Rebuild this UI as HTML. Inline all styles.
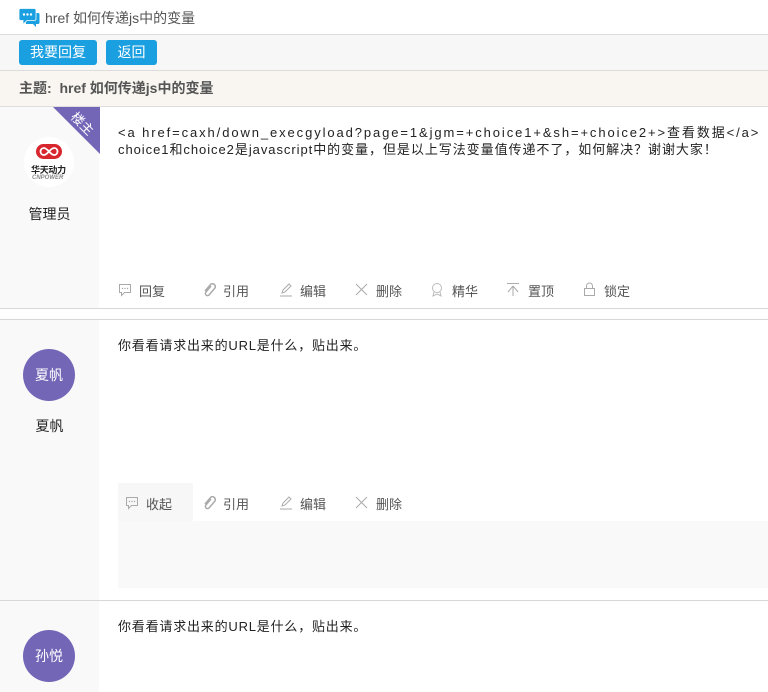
<!DOCTYPE html>
<html><head><meta charset="utf-8"><style>
*{margin:0;padding:0;box-sizing:border-box}
body{width:768px;height:692px;overflow:hidden;background:#fff;font-family:"Liberation Sans","Noto Sans CJK SC",sans-serif;color:#333;position:relative}
.abs{position:absolute}
.hdr{left:0;top:0;width:768px;height:35px;border-bottom:1px solid #ddd;background:#fff}
.bar{left:0;top:35px;width:768px;height:36px;background:#f7f7f7;border-bottom:1px solid #ddd}
.btn{position:absolute;top:5px;height:25px;background:#1a9fe0;color:#fff;font-size:14px;line-height:25px;text-align:center;border-radius:3px}
.topic{left:0;top:71px;width:768px;height:36px;background:#f9f6f1;border-bottom:1px solid #ddd;font-size:14px;font-weight:bold;color:#555;line-height:35px;padding-left:19px}
.left{left:0;width:99px;background:#f9f9f9}
.line{left:0;width:768px;height:1px;background:#d8d8d8}
.txt{font-size:13px;color:#222;white-space:nowrap}
.act{font-size:13px;color:#555;white-space:nowrap}
.act span{position:absolute}
.av{border-radius:50%;background:#7466b7;color:#fff;font-size:14px;text-align:center;line-height:52px;width:52px;height:52px}
.nm{font-size:14px;color:#222;width:99px;text-align:center}
svg{position:absolute}
</style></head><body>
<div class="abs hdr">
<svg style="left:19px;top:8px" width="21" height="19" viewBox="0 0 21 19"><path d="M5 5h14a1.5 1.5 0 0 1 1.5 1.5v8A1.5 1.5 0 0 1 19 16h-2v3l-3-3H7" fill="#1a9fe0"/><path d="M1.5 .5h14a1.5 1.5 0 0 1 1.5 1.5v9a1.5 1.5 0 0 1-1.5 1.5H8l-4 4v-4H1.5A1.5 1.5 0 0 1 0 11V2A1.5 1.5 0 0 1 1.5.5z" fill="#1a9fe0" stroke="#fff" stroke-width=".8"/><circle cx="5" cy="6.5" r="1.2" fill="#fff"/><circle cx="8.5" cy="6.5" r="1.2" fill="#fff"/><circle cx="12" cy="6.5" r="1.2" fill="#fff"/></svg>
<div class="abs" style="left:45px;top:8px;font-size:14px;color:#555">href 如何传递js中的变量</div>
</div>
<div class="abs bar"><div class="btn" style="left:19px;width:78px">我要回复</div><div class="btn" style="left:106px;width:51px">返回</div></div>
<div class="abs topic">主题:&nbsp; href 如何传递js中的变量</div>

<div class="abs left" style="top:107px;height:201px"></div>
<svg style="left:53px;top:107px" width="47" height="47"><polygon points="0,0 47,0 47,47" fill="#7466b7"/><text x="29" y="21" transform="rotate(45 29 17)" font-size="13" fill="#fff" text-anchor="middle" font-family="Noto Sans CJK SC">楼主</text></svg>
<div class="abs" style="left:24px;top:137px;width:50px;height:50px;border-radius:50%;background:#fff"></div>
<svg style="left:36px;top:144px" width="26" height="15" viewBox="0 0 26 15"><rect x="0" y="0" width="26" height="15" rx="7.5" fill="#d8262f"/><path d="M8 4c-2 0-3.5 1.5-3.5 3.5S6 11 8 11c3.5 0 6.5-7 10-7 2 0 3.5 1.5 3.5 3.5S20 11 18 11c-3.5 0-6.5-7-10-7z" fill="none" stroke="#fff" stroke-width="1.8"/></svg>
<div class="abs" style="left:31px;top:163px;font-size:9px;font-weight:bold;color:#222;letter-spacing:-0.3px">华天动力</div>
<div class="abs" style="left:32px;top:175px;font-size:6px;color:#888;font-style:italic;font-weight:bold">CNPOWER</div>
<div class="abs nm" style="top:204px">管理员</div>
<div class="abs txt" style="left:118px;top:122px;letter-spacing:1.9px">&lt;a href=caxh/down_execgyload?page=1&amp;jgm=+choice1+&amp;sh=+choice2+&gt;查看数据&lt;/a&gt;</div>
<div class="abs txt" style="left:118px;top:139px;letter-spacing:0.95px">choice1和choice2是javascript中的变量，但是以上写法变量值传递不了，如何解决？谢谢大家！</div>
<div class="abs act" style="left:0;top:281px;width:768px">
<svg style="left:118px;top:2px" width="14" height="14"><path d="M1.5 1.5h11v8h-6l-3 3v-3h-2z" fill="none" stroke="#aaa"/><circle cx="4.5" cy="5.5" r=".7" fill="#aaa"/><circle cx="7" cy="5.5" r=".7" fill="#aaa"/><circle cx="9.5" cy="5.5" r=".7" fill="#aaa"/></svg><span style="left:139px">回复</span>
<svg style="left:202px;top:2px" width="14" height="14"><path d="M9 3L4 9a2 2 0 0 0 3 3l6-7a3 3 0 0 0-4-4L3 8" fill="none" stroke="#aaa" stroke-width="1.5"/></svg><span style="left:223px">引用</span>
<svg style="left:279px;top:1px" width="14" height="15"><path d="M3 11l1-3 6-6 2 2-6 6zM1 14h12" fill="none" stroke="#aaa"/></svg><span style="left:300px">编辑</span>
<svg style="left:355px;top:2px" width="13" height="13"><path d="M1 1l11 11M12 1L1 12" stroke="#aaa"/></svg><span style="left:376px">删除</span>
<svg style="left:430px;top:1px" width="14" height="15"><circle cx="7" cy="6" r="4.5" fill="none" stroke="#bbb"/><path d="M4 10l-1 4 4-2 4 2-1-4" fill="none" stroke="#bbb"/></svg><span style="left:452px">精华</span>
<svg style="left:506px;top:1px" width="14" height="14"><path d="M1 1.5h12M7 4v10M7 4l-5 6M7 4l5 6" fill="none" stroke="#aaa"/></svg><span style="left:528px">置顶</span>
<svg style="left:583px;top:1px" width="13" height="14"><rect x="1.5" y="6.5" width="10" height="7" fill="none" stroke="#aaa"/><path d="M3.5 6.5V4a3 3 0 0 1 6 0v2.5" fill="none" stroke="#aaa"/></svg><span style="left:604px">锁定</span>
</div>
<div class="abs line" style="top:308px"></div>
<div class="abs line" style="top:319px"></div>

<div class="abs left" style="top:320px;height:280px"></div>
<div class="abs av" style="left:23px;top:349px">夏帆</div>
<div class="abs nm" style="top:416px">夏帆</div>
<div class="abs txt" style="left:118px;top:335px;letter-spacing:0.8px">你看看请求出来的URL是什么，贴出来。</div>
<div class="abs" style="left:118px;top:483px;width:75px;height:38px;background:#f7f7f7"></div>
<div class="abs" style="left:118px;top:521px;width:650px;height:67px;background:#f9f9f9"></div>
<div class="abs act" style="left:0;top:494px;width:768px">
<svg style="left:125px;top:2px" width="14" height="14"><path d="M1.5 1.5h11v8h-6l-3 3v-3h-2z" fill="none" stroke="#aaa"/><circle cx="4.5" cy="5.5" r=".7" fill="#aaa"/><circle cx="7" cy="5.5" r=".7" fill="#aaa"/><circle cx="9.5" cy="5.5" r=".7" fill="#aaa"/></svg><span style="left:146px">收起</span>
<svg style="left:202px;top:2px" width="14" height="14"><path d="M9 3L4 9a2 2 0 0 0 3 3l6-7a3 3 0 0 0-4-4L3 8" fill="none" stroke="#aaa" stroke-width="1.5"/></svg><span style="left:223px">引用</span>
<svg style="left:279px;top:1px" width="14" height="15"><path d="M3 11l1-3 6-6 2 2-6 6zM1 14h12" fill="none" stroke="#aaa"/></svg><span style="left:300px">编辑</span>
<svg style="left:355px;top:2px" width="13" height="13"><path d="M1 1l11 11M12 1L1 12" stroke="#aaa"/></svg><span style="left:376px">删除</span>
</div>
<div class="abs line" style="top:600px"></div>

<div class="abs left" style="top:601px;height:91px"></div>
<div class="abs av" style="left:23px;top:630px">孙悦</div>
<div class="abs txt" style="left:118px;top:616px;letter-spacing:0.8px">你看看请求出来的URL是什么，贴出来。</div>
</body></html>
